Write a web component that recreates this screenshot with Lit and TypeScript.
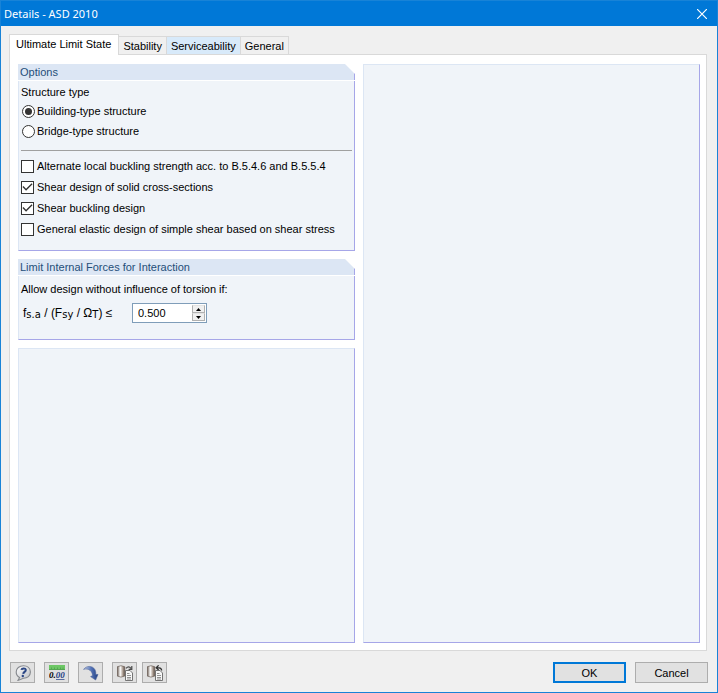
import { LitElement, html, css, svg, nothing } from "lit";
import { customElement, property, state } from "lit/decorators.js";
import { classMap } from "lit/directives/class-map.js";

@customElement("group-box")
class GroupBox extends LitElement {
  @property() heading = "";

  static styles = css`
    :host {
      display: flex;
      flex-direction: column;
      box-sizing: border-box;
      min-width: 0;
      background: linear-gradient(#f0f4f9, #f0f4f9) padding-box;
      border: 1px solid #dce6f4;
      border-right-color: #a6a6e8;
      border-bottom-color: #a6a6e8;
    }
    :host([heading]) {
      border-top: 0;
      border-right: 0;
    }
    .heading {
      margin: 0 0 0 -1px;
      padding-left: 2px;
      height: 16px;
      font: 11px/16px "Liberation Sans", Arial, sans-serif;
      color: #1f4e79;
      background: linear-gradient(to left, #a6a6e8 1px, #dce6f4 1px);
      border-bottom: 1px solid #ffffff;
      clip-path: polygon(0 0, calc(100% - 10px) 0, 100% 10px, 100% 100%, 0 100%);
    }
    .top {
      background: #ffffff;
      display: block;
    }
    .content {
      flex: 1;
      padding: 0 2px;
    }
    .framed {
      border-right: 1px solid #a6a6e8;
    }
  `;

  render() {
    return html`
      ${this.heading
        ? html`<div class="top"><h2 class="heading">${this.heading}</h2></div>`
        : nothing}
      <div class=${classMap({ content: true, framed: !!this.heading })}><slot></slot></div>
    `;
  }
}

const icons = {
  help: svg`
    <defs><linearGradient id="bubble" x1="0" y1="0" x2="1" y2="1">
      <stop offset="0" stop-color="#fff"/><stop offset="1" stop-color="#b9bcc2"/></linearGradient></defs>
    <path d="M8.4 .8C12.4 .8 15.4 3.2 15.4 7C15.4 10.8 12.4 13.2 8.4 13.2L3 15.4L4.6 12.4C2.4 11.4 1.2 9.6 1.2 7C1.2 3.2 4.4 .8 8.4 .8Z"
      fill="url(#bubble)" stroke="#85888d" stroke-width="1.1"/>
    <path d="M6.4 4.9C6.8 3 10.8 2.8 10.8 5C10.8 6.9 8.4 6.8 8.2 8.8" fill="none" stroke="#2c4785" stroke-width="2"/>
    <circle cx="7.8" cy="11" r="1.2" fill="#2c4785"/>`,
  units: svg`
    <rect x="0" y="0" width="16" height="5" fill="#6dc765"/>
    <path d="M0 4.5H16M2.5 2.5V4M5.5 2.5V4M8.5 2.5V4M11.5 2.5V4M14 2.5V4" stroke="#55a552" fill="none"/>
    <path d="M7 14.5H15.5" stroke="#596da1"/>
    <text x="0" y="13" class="digits">0.<tspan class="blue">00</tspan></text>`,
  arrow: svg`
    <defs><linearGradient id="curve" x1="0" y1="0" x2="1" y2="0">
      <stop offset="0" stop-color="#d5dcec"/><stop offset=".5" stop-color="#5877bb"/><stop offset="1" stop-color="#203f80"/></linearGradient></defs>
    <path d="M.6 4.4C3.4 .4 9.6 .6 11.8 4.4C12.8 6 12.8 7.6 12.8 9.6L15 9.4L12.6 15L7.6 11.6L9.6 10.6C9.4 6.6 6 2.6 .6 4.4Z"
      fill="url(#curve)" stroke="#4a6299" stroke-width=".6"/>`,
  load: svg`
    <defs><linearGradient id="cyl" x1="0" y1="0" x2="1" y2="0">
      <stop offset="0" stop-color="#64564b"/><stop offset=".4" stop-color="#ffffff"/><stop offset=".7" stop-color="#b5a89e"/><stop offset="1" stop-color="#5b4b40"/></linearGradient></defs>
    <path d="M.2 1.8Q4 -.4 7.8 1.8V11Q4 13.2 .2 11Z" fill="url(#cyl)" stroke="#6f635b" stroke-width=".7"/>
    <path d="M9 3.4Q11.6 .2 14 3.4M14.8 1V4.4H11.6" fill="none" stroke="#4b4b4b" stroke-width="1.2"/>
    <path d="M8.5 5.5H13L15.5 8V15.5H8.5Z" fill="#f7f7f7" stroke="#666" stroke-width=".9"/>
    <path d="M10 8.5H12.5M10 10.5H14M10 12.5H14M10 14H14" stroke="#777" stroke-width=".8"/>`,
  save: svg`
    <defs><linearGradient id="cyl2" x1="0" y1="0" x2="1" y2="0">
      <stop offset="0" stop-color="#64564b"/><stop offset=".4" stop-color="#ffffff"/><stop offset=".7" stop-color="#b5a89e"/><stop offset="1" stop-color="#5b4b40"/></linearGradient></defs>
    <path d="M.2 1.8Q4 -.4 7.8 1.8V11Q4 13.2 .2 11Z" fill="url(#cyl2)" stroke="#6f635b" stroke-width=".7"/>
    <path d="M9 2.8H12Q14.6 3 14.6 5.6M11.6 .4L9.2 2.8L11.6 5" fill="none" stroke="#303030" stroke-width="1.3"/>
    <path d="M8.5 5.5H13L15.5 8V15.5H8.5Z" fill="#f7f7f7" stroke="#666" stroke-width=".9"/>
    <path d="M10 8.5H12.5M10 10.5H14M10 12.5H14M10 14H14" stroke="#777" stroke-width=".8"/>`,
};

const tools = [
  { name: "Help", icon: icons.help },
  { name: "Units and decimal places", icon: icons.units },
  { name: "Go to", icon: icons.arrow },
  { name: "Load defaults", icon: icons.load },
  { name: "Save as defaults", icon: icons.save },
];

@customElement("app-root")
class AppRoot extends LitElement {
  @state() private tab = 0;
  @state() private limit = 0.5;

  private tabs = ["Ultimate Limit State", "Stability", "Serviceability", "General"];
  private checks = [
    { text: "Alternate local buckling strength acc. to B.5.4.6 and B.5.5.4", on: false },
    { text: "Shear design of solid cross-sections", on: true },
    { text: "Shear buckling design", on: true },
    { text: "General elastic design of simple shear based on shear stress", on: false },
  ];

  static styles = css`
    :host {
      display: flex;
      flex-direction: column;
      box-sizing: border-box;
      min-height: 100vh;
      border: 1px solid #1883d7;
      background: #f0f0f0;
      color: #000000;
      font: 11px/16px "Liberation Sans", Tahoma, sans-serif;
    }
    * {
      box-sizing: border-box;
    }
    button,
    input {
      font: inherit;
      color: inherit;
      margin: 0;
      padding: 0;
    }
    .title {
      display: flex;
      align-items: center;
      justify-content: space-between;
      height: 25px;
      padding: 0 10px 0 3px;
      background: #0078d7;
      color: #ffffff;
    }
    .title h1 {
      margin: 0;
      font: 11px/16px "Noto Sans", sans-serif;
    }
    .close {
      display: flex;
      border: 0;
      background: none;
    }
    .tabs {
      display: flex;
      align-items: flex-end;
      padding: 8px 8px 0;
    }
    .tab {
      height: 18px;
      padding: 0 4px;
      border: 1px solid #d9d9d9;
      border-width: 1px 1px 0 0;
      background: #f0f0f0;
      white-space: nowrap;
    }
    .tab.hot {
      background: #d8eafa;
    }
    .tab.active {
      height: 21px;
      margin-bottom: -1px;
      padding: 0 7px 2px 6px;
      border-left-width: 1px;
      background: #ffffff;
      z-index: 1;
    }
    .panel {
      flex: 1;
      display: grid;
      grid-template-columns: 1fr 1fr;
      gap: 8px;
      margin: 0 10px 0 8px;
      padding: 9px 6px 7px 8px;
      border: 1px solid #d9d9d9;
      background: #ffffff;
    }
    .column {
      display: flex;
      flex-direction: column;
      gap: 8px;
      min-width: 0;
    }
    .fill {
      flex: 1;
    }
    fieldset {
      margin: 0;
      padding: 0;
      border: 0;
    }
    .types {
      padding: 0 0 9px;
      border-bottom: 1px solid #a0a0a0;
    }
    legend {
      padding: 2px 0 0;
      line-height: 18px;
    }
    .option {
      display: flex;
      align-items: center;
      gap: 3px;
      height: 20px;
      white-space: nowrap;
    }
    .types .option {
      gap: 2px;
      padding-left: 1px;
    }
    .checks {
      display: grid;
      gap: 1px;
      padding: 5px 0 11px;
    }
    .option input {
      appearance: none;
      display: grid;
      place-items: center;
      flex: none;
      width: 13px;
      height: 13px;
      border: 1px solid #333333;
      background: #ffffff;
    }
    .option input[type="radio"] {
      border-radius: 50%;
    }
    .option input[type="radio"]:checked::before {
      content: "";
      width: 7px;
      height: 7px;
      border-radius: 50%;
      background: #333333;
    }
    .option input[type="checkbox"]:checked::before {
      content: "";
      width: 11px;
      height: 11px;
      background: #333333;
      clip-path: polygon(4% 50%, 13% 42%, 37% 66%, 87% 16%, 96% 25%, 37% 83%);
    }
    .note {
      margin: 0;
      padding: 5px 0;
      line-height: 16px;
    }
    .limit {
      display: flex;
      align-items: center;
      height: 22px;
      margin-bottom: 15px;
    }
    .formula {
      width: 111px;
      padding-left: 2px;
      font-size: 12px;
      white-space: pre;
    }
    .formula span {
      font-family: "DejaVu Sans", sans-serif;
      font-size: 10px;
      position: relative;
      top: 1px;
    }
    .spin {
      display: flex;
      width: 75px;
      height: 20px;
      padding: 1px;
      border: 1px solid #7f9db9;
      background: #ffffff;
    }
    .spin input {
      flex: 1;
      min-width: 0;
      padding-left: 4px;
      border: 0;
      outline: 0;
      background: none;
    }
    .steps {
      display: grid;
      width: 13px;
    }
    .steps button {
      display: grid;
      place-items: center;
      min-height: 0;
      border: 1px solid #b0b0b0;
      border-top-color: #e3e3e3;
      background: #f0f0f0;
    }
    .footer {
      display: flex;
      align-items: center;
      padding: 11px 9px 9px;
    }
    .tool {
      display: grid;
      place-items: center;
      width: 25px;
      height: 21px;
      margin-right: 9px;
      border: 1px solid #adadad;
      background: #e1e1e1;
    }
    .tool:nth-child(4) {
      margin-right: 5px;
    }
    .digits {
      font: italic bold 9px "Liberation Serif", serif;
    }
    .blue {
      fill: #263f85;
    }
    .actions {
      display: flex;
      gap: 9px;
      margin-left: auto;
    }
    .action {
      width: 73px;
      height: 21px;
      border: 1px solid #adadad;
      background: #e1e1e1;
    }
    .action.primary {
      border: 2px solid #0078d7;
    }
  `;

  private step(by: number) {
    this.limit = Math.max(0, this.limit + by);
  }

  render() {
    return html`
      <header class="title">
        <h1>Details - ASD 2010</h1>
        <button class="close" aria-label="Close">
          <svg width="10" height="10" viewBox="0 0 10 10">
            <path d="M0 0L10 10M10 0L0 10" stroke="#fff" stroke-width="1.2" />
          </svg>
        </button>
      </header>
      <nav class="tabs" role="tablist">
        ${this.tabs.map(
          (text, i) => html`<button
            role="tab"
            aria-selected=${i === this.tab}
            class=${classMap({ tab: true, active: i === this.tab, hot: i === 2 })}
            @click=${() => (this.tab = i)}
          >${text}</button>`
        )}
      </nav>
      <main class="panel">
        <div class="column">
          <group-box heading="Options">
            <fieldset class="types">
              <legend>Structure type</legend>
              <label class="option"><input type="radio" name="type" checked />Building-type structure</label>
              <label class="option"><input type="radio" name="type" />Bridge-type structure</label>
            </fieldset>
            <div class="checks">
              ${this.checks.map(
                (c) => html`<label class="option"><input type="checkbox" .checked=${c.on} />${c.text}</label>`
              )}
            </div>
          </group-box>
          <group-box heading="Limit Internal Forces for Interaction">
            <p class="note">Allow design without influence of torsion if:</p>
            <div class="limit">
              <label class="formula" for="limit">f<span>s.a</span> / (F<span>sy</span> / Ω<span>T</span>) ≤</label>
              <div class="spin">
                <input id="limit" type="text" .value=${this.limit.toFixed(3)} />
                <div class="steps">
                  <button aria-label="Increase" @click=${() => this.step(0.1)}>
                    <svg width="5" height="3" viewBox="0 0 5 3"><path d="M0 3L2.5 0L5 3Z" /></svg>
                  </button>
                  <button aria-label="Decrease" @click=${() => this.step(-0.1)}>
                    <svg width="5" height="3" viewBox="0 0 5 3"><path d="M0 0L2.5 3L5 0Z" /></svg>
                  </button>
                </div>
              </div>
            </div>
          </group-box>
          <group-box class="fill"></group-box>
        </div>
        <group-box></group-box>
      </main>
      <footer class="footer">
        ${tools.map(
          (t) => html`<button class="tool" aria-label=${t.name}>
            <svg width="16" height="16" viewBox="0 0 16 16">${t.icon}</svg>
          </button>`
        )}
        <div class="actions">
          <button class="action primary">OK</button>
          <button class="action">Cancel</button>
        </div>
      </footer>
    `;
  }
}
